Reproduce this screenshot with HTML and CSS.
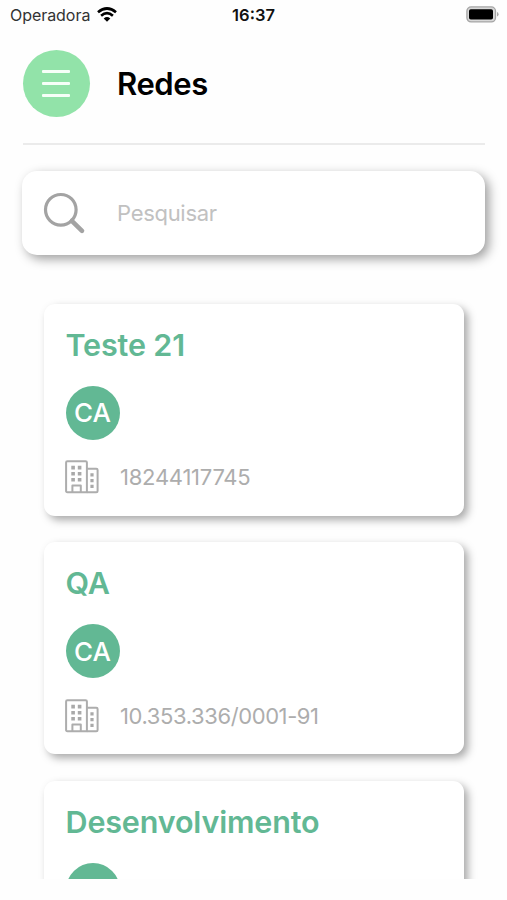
FILE: index.html
```html
<!DOCTYPE html>
<html lang="pt-BR">
<head>
<meta charset="utf-8">
<title>Redes</title>
<link rel="stylesheet" href="styles.css">
</head>
<body>
<svg width="0" height="0" class="sprite" aria-hidden="true">
  <symbol id="building" viewBox="0 0 34 34">
    <g fill="none" stroke="#adadad" stroke-width="2" stroke-linejoin="round">
      <path d="M2.4 1.3H20.6Q21.9 1.3 21.9 2.6V32.2H2.4Q1.1 32.2 1.1 30.9V2.6Q1.1 1.3 2.4 1.3Z"/>
      <path d="M21.9 8.7H31.3Q32.6 8.7 32.6 10V30.9Q32.6 32.2 31.3 32.2H21.9"/>
      <path d="M7.4 32V25.4H15.8V32"/>
    </g>
    <path fill="#a9a9a9" d="M6.3 5.8h3.6v3.6H6.3zM12.8 5.8h3.6v3.6h-3.6zM6.3 11.9h3.6v3.6H6.3zM12.8 11.9h3.6v3.6h-3.6zM6.3 18h3.6v3.6H6.3zM12.8 18h3.6v3.6h-3.6zM25.4 13.2h3.2v3.2h-3.2zM25.4 19h3.2v3.2h-3.2zM25.4 24.8h3.2v3.2h-3.2z"/>
  </symbol>
</svg>
<div class="screen">
  <div class="status">
    <div class="carrier"><span class="operator">Operadora</span>
      <svg class="wifi" width="20" height="15" viewBox="0 0 20 15"><g fill="none" stroke="#000" stroke-width="2.7"><path d="M1 5.2Q10-2.2 19 5.2"/><path d="M4.1 8.7Q10 3.7 15.9 8.7"/></g><path d="M6.7 11.4Q10 8.7 13.3 11.4L10 14.8Z"/></svg>
    </div>
    <span class="clock">16:37</span>
    <svg class="battery" width="33" height="17" viewBox="0 0 33 17"><rect x=".9" y=".9" width="28.6" height="15" rx="4.2" fill="#d8d8d8" stroke="#a5a5a5" stroke-width="1.3"/><rect x="3" y="3.2" width="24" height="10.4" rx="1.8"/><path d="M31 6v4.6q1.6-.6 1.6-2.3T31 6Z" fill="#aaa"/></svg>
  </div>
  <header class="header">
    <button class="menu" aria-label="Menu"><span class="bar"></span><span class="bar"></span><span class="bar"></span></button>
    <h1 class="title">Redes</h1>
  </header>
  <div class="search">
    <svg width="44" height="44" viewBox="0 0 44 44" fill="none" stroke="#a3a3a3"><circle cx="18.8" cy="18.8" r="15.3" stroke-width="3.2"/><path d="M29.8 29.8L40 39.8" stroke-width="4.6" stroke-linecap="round"/></svg>
    <span class="placeholder">Pesquisar</span>
  </div>
  <main class="list">
    <article class="card">
      <h2 class="name">Teste 21</h2>
      <div class="avatar"><span>CA</span></div>
      <div class="doc"><svg width="34" height="34"><use href="#building"/></svg><span class="cpf">18244117745</span></div>
    </article>
    <article class="card">
      <h2 class="name">QA</h2>
      <div class="avatar"><span>CA</span></div>
      <div class="doc"><svg width="34" height="34"><use href="#building"/></svg><span class="cnpj">10.353.336/0001-91</span></div>
    </article>
    <article class="card">
      <h2 class="name">Desenvolvimento</h2>
      <div class="avatar"></div>
    </article>
  </main>
</div>
</body>
</html>
```
FILE: styles.css
```css
* { box-sizing: border-box; }
body {
  margin: 0;
  background: #fefefe;
  font-family: Inter, "Liberation Sans", sans-serif;
}
h1, h2 { margin: 0; }
svg { display: block; flex: none; }
span { white-space: nowrap; }
.sprite { position: absolute; }
.screen { height: 878.5px; overflow: hidden; }
.status {
  display: grid;
  grid-template-columns: 1fr auto 1fr;
  align-items: center;
  height: 30px;
  padding: 0 8px 0 10px;
}
.carrier { display: flex; align-items: center; gap: 7px; }
.operator { font-size: 16px; color: #333; letter-spacing: -0.05px; }
.wifi { margin-top: -2px; }
.clock { margin-left: -2px; font-size: 16.5px; font-weight: 600; color: #111; }
.battery { justify-self: end; margin-top: -2px; }
.header {
  display: flex;
  align-items: center;
  gap: 27px;
  height: 115px;
  margin: 0 22px 0 22.5px;
  padding-bottom: 6px;
  border-bottom: 2px solid #ebebeb;
}
.menu {
  display: flex;
  flex-direction: column;
  align-items: center;
  justify-content: center;
  gap: 8.7px;
  width: 67.5px;
  height: 67.5px;
  padding: 0;
  border: 0;
  border-radius: 50%;
  background: #92e3a9;
}
.bar { width: 28px; height: 3.2px; border-radius: 1px; background: #f6fff8; }
.title { font-size: 31px; font-weight: 600; line-height: 40px; letter-spacing: -0.4px; }
.search {
  display: flex;
  align-items: center;
  gap: 31px;
  height: 84px;
  margin: 26px 22px 0 22px;
  padding-left: 20px;
  border-radius: 15px;
  background: #fff;
  box-shadow: 4px 4px 11px rgba(0, 0, 0, 0.38);
}
.placeholder { font-size: 22px; color: #c1c1c1; letter-spacing: -0.3px; }
.list {
  display: flex;
  flex-direction: column;
  gap: 26.5px;
  padding: 48.5px 43.5px 0;
}
.card {
  height: 212px;
  padding: 19px 22px 0;
  border-radius: 11px;
  background: #fff;
  box-shadow: 4px 4px 9px rgba(0, 0, 0, 0.34);
}
.name { font-size: 30.5px; font-weight: 600; line-height: 44px; letter-spacing: -0.15px; color: #62b894; white-space: nowrap; }
.avatar {
  display: flex;
  align-items: center;
  justify-content: center;
  width: 54px;
  height: 54px;
  margin-top: 19px;
  border-radius: 50%;
  background: #62b894;
  color: #fff;
  font-size: 26px;
  font-weight: 500;
}
.doc { display: flex; align-items: center; gap: 21px; height: 34px; margin-top: 20.5px; color: #adadad; font-size: 22px; }
.doc svg { margin-left: -0.5px; }
.cpf { letter-spacing: -0.25px; }
.cnpj { letter-spacing: -0.4px; }
```
